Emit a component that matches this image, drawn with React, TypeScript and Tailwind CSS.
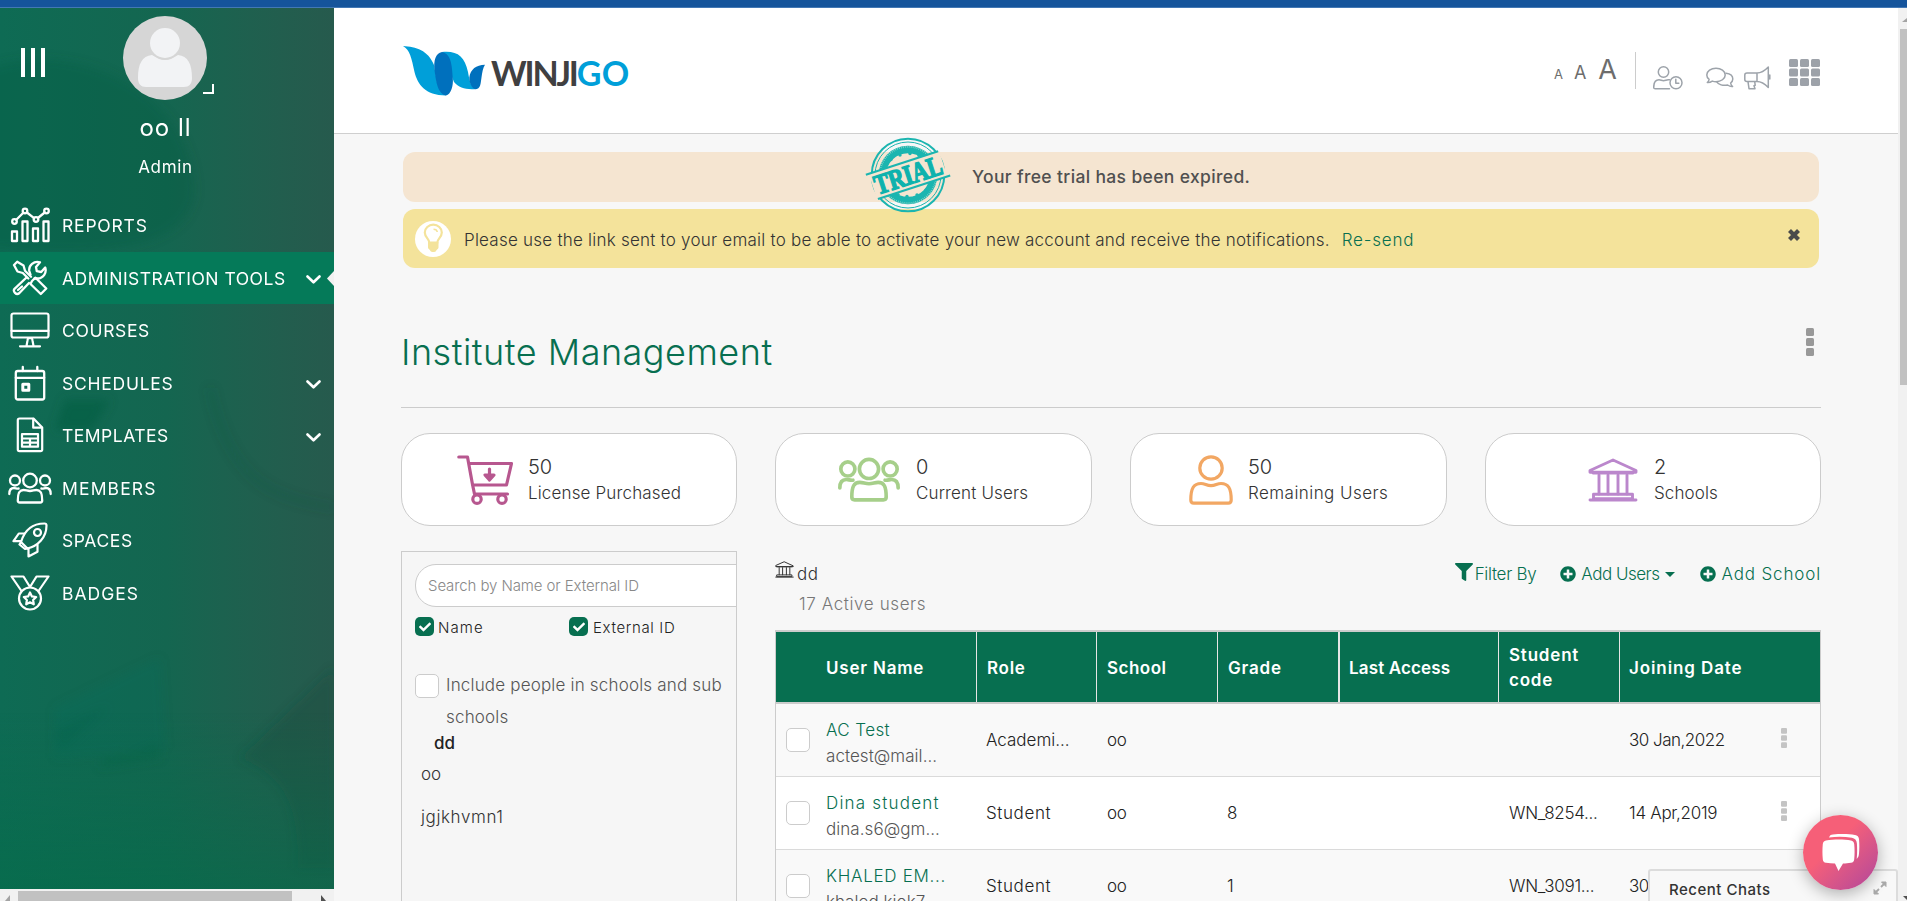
import React from "react";
import { FaFilter, FaPlusCircle, FaCheck } from "react-icons/fa";

type IconProps = { className?: string };

const stroke = {
  fill: "none",
  stroke: "currentColor",
  strokeLinecap: "round" as const,
  strokeLinejoin: "round" as const,
};

function ReportsIcon() {
  return (
    <svg width="40" height="36" viewBox="0 0 40 36" {...stroke} strokeWidth="2.300">
      <rect x="2" y="24.500" width="5" height="9.500" />
      <rect x="12.500" y="14.500" width="5" height="19.500" />
      <rect x="23" y="21.500" width="5" height="12.500" />
      <rect x="33.500" y="14.500" width="5" height="19.500" />
      <circle cx="4.500" cy="14.500" r="2.300" />
      <circle cx="15" cy="4" r="2.300" />
      <circle cx="26" cy="12.500" r="2.300" />
      <circle cx="36.500" cy="4" r="2.300" />
      <path d="M6.300 12.700 13.300 5.800M16.900 5.500l7.200 5.600M27.900 11l6.800-5.500" />
    </svg>
  );
}

function ToolsIcon() {
  return (
    <svg width="36" height="36" viewBox="0 0 36 36" {...stroke} strokeWidth="2.300">
      <path d="M2 5 5.200 1.800 11.500 5.500l1.500 5.300 6 6M2 5l3.500 6.500 5.300 1.500 5.500 5.500" />
      <path d="M18.500 14.500 17.300 11c-.8-5.500 4.500-10.500 10.700-8.700L24 7l.8 4.200 4.400.8 4-4.500c1.800 5-1.700 11-7.700 11h-3" />
      <path d="M14.500 17.500 2.500 28.800c-2 2.700 1.700 6.700 4.700 4.500L17 23" />
      <path d="M20 21l3.500-3.300L34.300 28.500 28.800 34 18.500 24z" />
      <path d="M6 30 10 26.500" />
    </svg>
  );
}

function MonitorIcon() {
  return (
    <svg width="40" height="36" viewBox="0 0 40 36" {...stroke} strokeWidth="2.200">
      <rect x="1.500" y="1.500" width="37" height="24" rx="2" />
      <path d="M1.500 18.800h37M10 34.300h20M16.500 34l1-5.500c.2-1.500.5-2.300 1.200-2.300h2.600c.7 0 1 .8 1.200 2.300l1 5.500" />
    </svg>
  );
}

function CalendarIcon() {
  return (
    <svg width="32" height="36" viewBox="0 0 32 36" {...stroke} strokeWidth="2.300">
      <rect x="1.800" y="6" width="28.400" height="28.500" rx="2" />
      <path d="M1.800 12.800h28.400M8.800 6V2M23.300 6V2" />
      <rect x="8.800" y="19.300" width="6" height="6" strokeWidth="3" />
    </svg>
  );
}

function SheetIcon() {
  return (
    <svg width="28" height="36" viewBox="0 0 28 36" {...stroke} strokeWidth="2.200">
      <path d="M1.800 3.200c0-1 .6-1.700 1.700-1.700h14l8.700 9v22c0 1-.6 1.700-1.700 1.700h-21c-1 0-1.700-.6-1.700-1.700z" />
      <path d="M17.200 1.800v8.900h8.700" />
      <path d="M6 17.200h16v12.500H6zM6 21.500h16M6 25.600h16M14 21.500v8" />
    </svg>
  );
}

function GroupIcon({ className, width = 2.3 }: IconProps & { width?: number }) {
  return (
    <svg className={className} viewBox="0 0 44 32" preserveAspectRatio="none" {...stroke} strokeWidth={width}>
      <circle cx="22" cy="8.500" r="6.800" />
      <circle cx="7" cy="8.500" r="5" />
      <circle cx="37" cy="8.500" r="5" />
      <path d="M9.800 28.500c0-7.500 1.500-10.500 5.700-10.500 2.500 0 3.700 1 6.500 1s4-1 6.500-1c4.200 0 5.700 3 5.700 10.500 0 1.300-.6 2-2 2H11.800c-1.400 0-2-.7-2-2z" />
      <path d="M1.300 22c0-4 1.600-6 4.600-6 1.700 0 2.700.7 4.700.5M42.700 22c0-4-1.600-6-4.600-6-1.700 0-2.700.7-4.700.5" />
    </svg>
  );
}

function RocketIcon() {
  return (
    <svg width="36" height="36" viewBox="0 0 36 36" {...stroke} strokeWidth="2.200">
      <path d="M9 20C12 10 19 1.500 32.500 1.500c1.300 0 2 .6 2 2C34.500 16 25.500 24 15.500 26.500z" />
      <circle cx="25.500" cy="10.500" r="3.500" />
      <path d="M12.500 11.500H6.800L1.500 19.200h7M9 20l-1.500 2.500 5.500 4.500 2.500-.5M16.500 27v7.500l9-4.700v-7.300" />
    </svg>
  );
}

function MedalIcon() {
  return (
    <svg width="40" height="36" viewBox="0 0 40 36" {...stroke} strokeWidth="2.200">
      <circle cx="20" cy="23.500" r="11" />
      <path d="M11.500 16 1.500 1.500h12L20 12M28.500 16l10-14.500h-12L20 12" />
      <path d="m20 17.500 1.900 3.900 4.300.6-3.100 3 .7 4.300-3.800-2-3.800 2 .7-4.300-3.100-3 4.300-.6z" />
    </svg>
  );
}

function ChevronIcon() {
  return (
    <svg className="mt-[4px]" width="15" height="9" viewBox="0 0 15 9" {...stroke} strokeWidth="2.600">
      <path d="m1.500 1.500 6 5.800 6-5.800" />
    </svg>
  );
}

function CartIcon() {
  return (
    <svg width="56" height="50" viewBox="0 0 56 50" {...stroke} strokeWidth="3.200">
      <path d="M1.800 2h8.700l5 27.500L17.500 39h33M12.500 8.500h42L49.500 30h-34" />
      <circle cx="20" cy="44.200" r="4.200" />
      <circle cx="45" cy="44.200" r="4.200" />
      <path d="M32.500 14v6" />
      <path d="M28 20h9l-4.500 5z" fill="currentColor" />
    </svg>
  );
}

function PersonIcon() {
  return (
    <svg width="44" height="50" viewBox="0 0 44 50" {...stroke} strokeWidth="3.200">
      <circle cx="22" cy="13" r="11.200" />
      <path d="M1.800 45c0-12 3-16.500 10.200-16.500 4 0 5.500 2.200 10 2.200s6-2.200 10-2.200c7.200 0 10.200 4.500 10.200 16.500 0 2.300-.8 3.200-3 3.200H4.800c-2.200 0-3-.9-3-3.200z" />
    </svg>
  );
}

function BankIcon({ className, width = 2.9 }: IconProps & { width?: number }) {
  return (
    <svg className={className} viewBox="0 0 50 44" {...stroke} strokeWidth={width}>
      <path d="M25 2 48 12.500v1.800H2v-1.800zM5 15h40" />
      <path d="M11 17v19M20 17v19M30 17v19M39 17v19" />
      <path d="M5.500 36.200h39v4.600h-39zM2 42h46" />
    </svg>
  );
}

function ButterflyLogo() {
  return (
    <svg width="82" height="50" viewBox="0 0 82 50">
      <path fill="#009fd9" d="M0 0c13 1 25 4 31 19l3 17 9 13.500C22 49.500 14.500 38 11.500 26 8.500 12 7 4 0 0z" />
      <path fill="#009fd9" d="M39 6c15-1.500 22.500 4 26 20 1.500 9 3 15 8 17-10 .8-17-1-22-7z" />
      <path fill="#0070bd" d="M39 6c-6.500 1-8.500 9-7.500 18 1.500 12 3.500 24 11.500 25.500 5-1 7.500-10 6.800-17C49 20 48.500 8 39 6z" />
      <path fill="#0070bd" d="M82 18.800c-9 .2-14.500 4.500-15.700 12.700 0 5 2.200 10.500 5.700 11.700 6-.2 5.500-5.700 6.500-11.700.7-5 1.500-10 3.500-12.700z" />
    </svg>
  );
}

function TrialStamp() {
  const stars = [-14, -5, 5, 14];
  return (
    <svg width="86" height="76" viewBox="-43 -38 86 76">
      <g fill="none" stroke="#1bb5b0">
        <circle r="36.300" strokeWidth="2" />
        <circle r="33" strokeWidth="1" />
        <circle r="25.500" strokeWidth="7.500" />
        <circle r="28.300" strokeWidth="2" stroke="#9ad8cb" strokeDasharray="0.700 1.300" />
      </g>
      <g transform="rotate(-18)">
        <rect x="-37" y="-13" width="74" height="26.500" fill="#f5e5d1" />
        <path d="M-40-13.200h76M-36 13.500h76" stroke="#1bb5b0" strokeWidth="2.200" />
        <text
          textAnchor="middle"
          y="9.500"
          textLength="70"
          lengthAdjust="spacingAndGlyphs"
          fill="#0eb2ad"
          stroke="#0eb2ad"
          strokeWidth="1.500"
          className="font-['Liberation_Serif',serif] text-[28px] font-bold"
        >
          TRIAL
        </text>
      </g>
      <g fill="#1bb5b0">
        {stars.map((x) => (
          <circle key={x} cx={x - 3} cy={-17.5 - (14 - Math.abs(x)) * 0.35 - x * 0.15} r="1.700" />
        ))}
        {stars.map((x) => (
          <circle key={x} cx={x + 4} cy={17.5 + (14 - Math.abs(x)) * 0.35 - x * 0.15} r="1.700" />
        ))}
      </g>
    </svg>
  );
}

function BulbIcon() {
  return (
    <svg width="36" height="36" viewBox="0 0 36 36">
      <circle cx="18" cy="18" r="18" fill="#fff" />
      <path
        d="M14.300 21.500c0-3.500-4.500-5-4.500-10a8.500 7.800 0 0 1 17 0c0 5-4.500 6.500-4.500 10z"
        fill="#fff"
        stroke="#f4e39b"
        strokeWidth="2.200"
      />
      <path d="M13 21h10.500v5.500c0 1.500-2 2-2.500 3.500-.5 1.300-5 1.300-5.500 0-.5-1.500-2.500-2-2.500-3.500z" fill="#f4e39b" />
      <path d="M18.500 8.200c2 0 3.500 1 3.800 2.800" fill="none" stroke="#f4e39b" strokeWidth="1.500" />
    </svg>
  );
}

function CloseIcon() {
  return (
    <svg className="mb-[8px] ml-auto" width="12" height="12" viewBox="0 0 12 12" stroke="#4a4a4a" strokeWidth="4.200">
      <path d="m1.500 1.500 9 9M10.500 1.500l-9 9" />
    </svg>
  );
}

function UserClockIcon() {
  return (
    <svg width="30" height="24" viewBox="0 0 30 24" {...stroke} strokeWidth="1.500">
      <circle cx="10.500" cy="6" r="5.200" />
      <path d="M16.500 22.800H2.200c-1 0-1.500-.5-1.500-1.300C.7 16 2.500 13.800 6 13.800c2 0 2.500.9 4.500.9s2.700-.9 4.700-.9h1.300" />
      <circle cx="23" cy="16.800" r="6" />
      <path d="M22.800 13.300v4h3" />
    </svg>
  );
}

function ChatsIcon() {
  return (
    <svg width="28" height="22" viewBox="0 0 28 22" {...stroke} strokeWidth="1.500">
      <path d="M10 1.200c5 0 9.200 2.800 9.200 6.700s-4.200 6.800-9.200 6.800c-1.300 0-2.500-.2-3.700-.6-1.300.9-3 1.500-5 1.400 1.200-1 1.700-2 1.800-3.200C1.600 11.200.8 9.600.8 7.900.8 4 5 1.200 10 1.200z" />
      <path d="M20 6.300c4 .4 6.800 2.700 6.800 5.700 0 1.700-.8 3-2.200 4 .2 1.200.8 2.500 2 3.500-1.800.2-3.500-.4-5-1.500-4.500 1-9.300-.3-11-3.300" />
    </svg>
  );
}

function MegaphoneIcon() {
  return (
    <svg width="27" height="24" viewBox="0 0 27 24" {...stroke} strokeWidth="1.500">
      <path d="M13 7H3C1.500 7 .8 7.700.8 9v4.500c0 1.300.7 2 2.200 2h10zM13 7c4.500 0 8-2.500 11.300-6v20.500C21 18 17.500 15.500 13 15.500M4 15.700l1 7h6l-1-3 1.200-.5-.5-3.500M25.800 9v4" />
    </svg>
  );
}

function AppsIcon() {
  return (
    <svg width="31" height="27" viewBox="0 0 31 27" fill="#9da2a9">
      {[0, 11, 22].map((x) =>
        [0, 9.5, 19].map((y) => <rect key={`${x}-${y}`} x={x} y={y} width="9" height="8" rx="1.500" />)
      )}
    </svg>
  );
}

const menu = [
  { label: "REPORTS", icon: <ReportsIcon />, chevron: false, active: false, track: "tracking-[0.8px]" },
  { label: "ADMINISTRATION TOOLS", icon: <ToolsIcon />, chevron: true, active: true, track: "tracking-[0.5px]" },
  { label: "COURSES", icon: <MonitorIcon />, chevron: false, active: false, track: "tracking-[0.65px]" },
  { label: "SCHEDULES", icon: <CalendarIcon />, chevron: true, active: false, track: "tracking-[0.75px]" },
  { label: "TEMPLATES", icon: <SheetIcon />, chevron: true, active: false, track: "tracking-[0.5px]" },
  { label: "MEMBERS", icon: <GroupIcon className="h-[32px] w-[44px]" />, chevron: false, active: false, track: "tracking-[1.150px]" },
  { label: "SPACES", icon: <RocketIcon />, chevron: false, active: false, track: "tracking-[0.6px]" },
  { label: "BADGES", icon: <MedalIcon />, chevron: false, active: false, track: "tracking-[1px]" },
];

function Sidebar() {
  return (
    <aside className="flex w-[334px] shrink-0 flex-col">
      <div className="relative h-[881px] overflow-hidden bg-linear-to-r from-[#0e6b54] via-[#146650] to-[#265a4d] text-white">
        <svg className="absolute inset-0" width="334" height="881" viewBox="0 0 334 881">
          <defs>
            <linearGradient id="fade" x1="0" y1="0" x2="0" y2="1">
              <stop offset="0.800" stopColor="#046d4a" stopOpacity="0" />
              <stop offset="1" stopColor="#046d4a" stopOpacity="0.600" />
            </linearGradient>
            <filter id="soft">
              <feGaussianBlur stdDeviation="5" />
            </filter>
          </defs>
          <g filter="url(#soft)">
            <path d="M-10 60C70 30 190 80 195 180c0 60-90 70-205 60z" fill="#035c3e" opacity="0.300" />
            <path d="M65 392h45l-18 30H55z" fill="#035c3e" opacity="0.550" />
            <path d="M210 380c20 100 70 110 124 120" stroke="#1b5147" strokeWidth="6" fill="none" opacity="0.200" />
            <path d="M55 700 160 650l5 90-110 10z" fill="#12705f" opacity="0.200" />
            <path d="M55 722 110 698l-50 45z" fill="#046044" opacity="0.250" />
            <path d="M100 752l60-16v14l-60 10z" fill="#046044" opacity="0.350" />
            <path d="M240 750l94-90v200h-36c0-60-10-90-58-110z" fill="#134a3e" opacity="0.350" />
          </g>
          <rect width="334" height="881" fill="url(#fade)" />
        </svg>
        <div className="relative flex h-full flex-col">
          <div className="relative flex h-[191px] flex-col items-center pt-[8px]">
            <div className="absolute left-[21px] top-[40px] flex gap-[6px]">
              <span className="h-[29px] w-[4px] bg-white" />
              <span className="h-[29px] w-[4px] bg-white" />
              <span className="h-[29px] w-[4px] bg-white" />
            </div>
            <svg className="mr-[4px]" width="84" height="84" viewBox="0 0 84 84">
              <circle cx="42" cy="42" r="42" fill="#d6d6d6" />
              <path
                d="M15 62c0-14 4-22 14-23 5 3 8 5 13 5s8-2 13-5c10 1 14 9 14 23 0 6-3 9-8 9H23c-5 0-8-3-8-9z"
                fill="#f2f3f5"
              />
              <circle cx="42" cy="27" r="16.500" fill="#d6d6d6" />
              <circle cx="42" cy="27" r="15" fill="#f2f3f5" />
            </svg>
            <span className="absolute left-[203px] top-[76px] h-[10px] w-[11px] border-b-2 border-r-2 border-white" />
            <div className="mr-[3px] mt-[13px] text-[24px] leading-[30px] tracking-[1px]">oo ll</div>
            <div className="mr-[3px] mt-[14px] text-[17px] leading-[20px] tracking-[0.7px]">Admin</div>
          </div>
          <nav>
            {menu.map((m) => (
              <div
                key={m.label}
                className={`relative flex h-[52.5px] items-center pr-[13px] ${m.active ? "bg-[#057a59]" : ""}`}
              >
                <span className="flex w-[60px] shrink-0 items-center justify-center">{m.icon}</span>
                <span className={`mt-px flex-1 whitespace-nowrap pl-[2px] text-[17.5px] leading-none ${m.track}`}>{m.label}</span>
                {m.chevron && <ChevronIcon />}
                {m.active && (
                  <svg className="absolute right-0 top-[19px]" width="7" height="15" viewBox="0 0 7 15">
                    <path d="M7 0v15L0 7.500z" fill="#f1f1f1" />
                  </svg>
                )}
              </div>
            ))}
          </nav>
        </div>
      </div>
      <div className="flex h-[12px] items-end justify-between bg-[#f1f1f1] pl-[5px] pr-[8px]">
        <svg width="5" height="6" viewBox="0 0 5 6">
          <path d="M5 0v6H0z" fill="#a3a3a3" />
        </svg>
        <span className="mr-[21px] h-[10px] w-[274px] bg-[#c1c1c1]" />
        <svg width="5" height="6" viewBox="0 0 5 6">
          <path d="M0 0v6h5z" fill="#505050" />
        </svg>
      </div>
    </aside>
  );
}

function Header() {
  return (
    <header className="flex h-[126px] shrink-0 items-start justify-between border-b border-[#cfcfcf] bg-white pl-[69px] pr-[78px]">
      <div className="flex pt-[38px]">
        <ButterflyLogo />
        <div className="ml-[6px] mt-[10px] whitespace-nowrap font-['Lato',sans-serif] text-[34px] font-bold leading-[34px] tracking-[-2.200px] text-[#404041]">
          WINJI<span className="tracking-[0.3px] text-[#009fd9]">GO</span>
        </div>
      </div>
      <div className="flex items-start text-[#9da3aa]">
        <div className="mt-[45px] flex items-baseline text-[#6d6d6d]">
          <span className="text-[13px]">A</span>
          <span className="ml-[11px] text-[18px]">A</span>
          <span className="ml-[12px] text-[27px] leading-[34px]">A</span>
        </div>
        <span className="ml-[18px] mt-[44px] h-[37px] w-px bg-[#ccc]" />
        <div className="ml-[17px] mt-[58px]">
          <UserClockIcon />
        </div>
        <div className="ml-[23px] mt-[59px]">
          <ChatsIcon />
        </div>
        <div className="ml-[10px] mt-[58px]">
          <MegaphoneIcon />
        </div>
        <div className="ml-[18px] mt-[51px]">
          <AppsIcon />
        </div>
      </div>
    </header>
  );
}

function Dots({ className }: IconProps) {
  return (
    <svg className={className} viewBox="0 0 8 28" preserveAspectRatio="none" fill="currentColor">
      <rect width="8" height="8" rx="1.500" />
      <rect y="10" width="8" height="8" rx="1.500" />
      <rect y="20" width="8" height="8" rx="1.500" />
    </svg>
  );
}

const stats = [
  { value: "50", label: "License Purchased", icon: <CartIcon />, pad: "pl-[55px]", gap: "ml-[15px]", color: "text-[#b7578f]", track: "tracking-[0.15px]" },
  { value: "0", label: "Current Users", icon: <GroupIcon className="h-[45px] w-[62px]" width={2.6} />, pad: "pl-[62px]", gap: "ml-[16px]", color: "text-[#a6cf8a]", track: "tracking-[0.15px]" },
  { value: "50", label: "Remaining Users", icon: <PersonIcon />, pad: "pl-[58px]", gap: "ml-[15px]", color: "text-[#f2a763]", track: "tracking-[0.45px]" },
  { value: "2", label: "Schools", icon: <BankIcon className="h-[44px] w-[50px]" />, pad: "pl-[102px]", gap: "ml-[16px]", color: "text-[#bb87cc]", track: "tracking-[0.1px]" },
];

function StatCards() {
  return (
    <div className="mt-[25px] grid grid-cols-[336px_317px_317px_336px] gap-[38px]">
      {stats.map((s) => (
        <div key={s.label} className={`flex h-[93px] items-center rounded-[29px] border border-[#ccc] bg-white ${s.pad}`}>
          <span className={s.color}>{s.icon}</span>
          <div className={`mt-[2px] whitespace-nowrap text-[#333] ${s.gap}`}>
            <div className="text-[20px] font-light leading-[26px]">{s.value}</div>
            <div className={`text-[17px] font-light leading-[27px] ${s.track}`}>{s.label}</div>
          </div>
        </div>
      ))}
    </div>
  );
}

function TickedBox() {
  return (
    <span className="flex size-[19px] items-center justify-center rounded-[5px] bg-[#076f50] text-white">
      <FaCheck size={12} />
    </span>
  );
}

function SearchPanel() {
  return (
    <section className="h-[400px] overflow-hidden border border-[#ccc] bg-[#f6f6f6] pl-[13px] pt-[12px]">
      <div className="flex h-[43px] w-[360px] items-center rounded-[21px] border border-[#ccc] bg-white pl-[12px] pt-px text-[15px] font-light tracking-[-0.1px] text-[#888]">
        Search by Name or External ID
      </div>
      <div className="mt-[9px] flex text-[15px] font-light leading-[19px] text-[#222]">
        <div className="flex w-[154px] items-center gap-[4px]">
          <TickedBox />
          <span className="mt-[2px] tracking-[1.1px]">Name</span>
        </div>
        <div className="flex items-center gap-[5px]">
          <TickedBox />
          <span className="mt-[2px] tracking-[0.65px]">External ID</span>
        </div>
      </div>
      <div className="mt-[32px] flex text-[17px] font-light leading-[32px] text-[#555]">
        <span className="mr-[7px] mt-[5px] size-[24px] shrink-0 rounded-[5px] border border-[#ccc] bg-white" />
        <span className="w-[290px] tracking-[0.18px]">
          Include people in schools and sub
          <br />
          schools
        </span>
      </div>
      <div className="pl-[19px] pt-px text-[17px] font-medium leading-[18px] text-[#222]">dd</div>
      <div className="pl-[6px] pt-px text-[17px] font-light leading-[43px] text-[#333]">oo</div>
      <div className="pl-[6px] text-[17px] font-light leading-[43px] tracking-[0.6px] text-[#333]">jgjkhvmn1</div>
    </section>
  );
}

const cols = "grid grid-cols-[200px_120px_121px_121px_160px_121px_201px]";

const rows = [
  { name: "AC Test", nameTrack: "tracking-[0.4px]", mail: "actest@mail...", role: "Academi...", roleTrack: "tracking-[0px]", grade: "", code: "", date: "30 Jan,2022", dateTrack: "tracking-[-0.5px]" },
  { name: "Dina student", nameTrack: "tracking-[1.2px]", mail: "dina.s6@gm...", role: "Student", roleTrack: "tracking-[0.6px]", grade: "8", code: "WN_8254...", date: "14 Apr,2019", dateTrack: "tracking-[-0.3px]" },
  { name: "KHALED EM...", nameTrack: "tracking-[0.7px]", mail: "khaled.kiok7...", role: "Student", roleTrack: "tracking-[0.6px]", grade: "1", code: "WN_3091...", date: "30 Jan,2022", dateTrack: "tracking-[-0.5px]" },
];

const headings = [
  { text: "User Name", cell: "pl-[50px] tracking-[0.8px]" },
  { text: "Role", cell: "border-l pl-[10px] tracking-[0.7px]" },
  { text: "School", cell: "border-l pl-[10px] tracking-[0.5px]" },
  { text: "Grade", cell: "border-l pl-[10px] tracking-[0.8px]" },
  { text: "Last Access", cell: "border-l-2 pl-[9px] tracking-[0.15px]" },
  { text: "Student code", cell: "border-l pl-[10px] pr-[10px] tracking-[0.8px]" },
  { text: "Joining Date", cell: "border-l pl-[9px] tracking-[0.9px]" },
];

function UsersSection() {
  return (
    <section>
      <div className="flex items-start justify-between text-[17px] font-light text-[#076f50]">
        <div className="flex pt-[10px] text-[#333]">
          <BankIcon className="h-[17px] w-[19px]" width={2.6} />
          <span className="ml-[3px] mt-[3px] leading-[20px] tracking-[0.4px]">dd</span>
        </div>
        <div className="flex items-start whitespace-nowrap pt-[11px] leading-[24px]">
          <FaFilter size={18} className="mt-px" />
          <span className="ml-[2px] tracking-[-0.3px]">Filter By</span>
          <FaPlusCircle size={16} className="ml-[24px] mt-[4px]" />
          <span className="ml-[5px] tracking-[-0.5px]">Add Users</span>
          <svg className="ml-[5px] mt-[10px]" width="10" height="5" viewBox="0 0 10 5">
            <path d="M0 0h10L5 5z" fill="currentColor" />
          </svg>
          <FaPlusCircle size={16} className="ml-[25px] mt-[4px]" />
          <span className="ml-[6px] tracking-[0.85px]">Add School</span>
        </div>
      </div>
      <div className="mt-[4px] h-[40px] pl-[24px] pt-[2px] text-[17px] font-light leading-[24px] tracking-[0.6px] text-[#777]">
        17 Active users
      </div>

      <div className="border-x border-[#ccc]">
        <div className={`${cols} h-[74px] border-b-2 border-t-2 border-[#ccc] bg-[#076f50]`}>
          {headings.map((h) => (
            <div
              key={h.text}
              className={`flex items-center border-[#e5e5e5] pt-[2px] text-[17px] font-semibold leading-[25px] text-white ${h.cell}`}
            >
              {h.text}
            </div>
          ))}
        </div>
        {rows.map((r, i) => (
          <div
            key={r.name}
            className={`${cols} h-[73px] items-center border-b border-[#dadada] text-[17px] font-light tracking-[-0.3px] text-[#222] ${
              i % 2 ? "bg-white" : "bg-[#f9f9f9]"
            }`}
          >
            <div className="flex items-center pl-[10px]">
              <span className="mr-[16px] size-[24px] shrink-0 rounded-[5px] border border-[#ccc] bg-white" />
              <div className="mt-[5px] whitespace-nowrap leading-[26px]">
                <div className={`text-[#076f50] ${r.nameTrack}`}>{r.name}</div>
                <div className="tracking-[0.05px] text-[#555]">{r.mail}</div>
              </div>
            </div>
            <div className={`pl-[10px] pt-[2px] ${r.roleTrack}`}>{r.role}</div>
            <div className="pl-[11px] pt-[2px]">oo</div>
            <div className="pl-[10px] pt-[2px]">{r.grade}</div>
            <div />
            <div className="pl-[11px] pt-[2px]">{r.code}</div>
            <div className="flex items-center justify-between pl-[10px] pr-[33px]">
              <span className={`pt-[2px] ${r.dateTrack}`}>{r.date}</span>
              <Dots className="mb-[4px] h-[20px] w-[6px] text-[#c4c4c4]" />
            </div>
          </div>
        ))}
      </div>
    </section>
  );
}

function Notices() {
  return (
    <div className="mt-[18px] flex flex-col gap-[7px] px-[2px]">
      <div className="relative flex h-[50px] items-center rounded-[12px] bg-[#f5e5d1] pl-[569px] text-[17.5px] font-medium text-[#505050]">
        <span className="absolute left-[462px] top-[-15px] z-10">
          <TrialStamp />
        </span>
        <span className="whitespace-nowrap tracking-[0.35px]">Your free trial has been expired.</span>
      </div>
      <div className="flex h-[59px] items-center rounded-[12px] bg-[#f4e39b] pl-[12px] pr-[19px] text-[17px] font-light text-[#333]">
        <BulbIcon />
        <span className="ml-[13px] mt-[5px] whitespace-nowrap tracking-[0.235px]">
          Please use the link sent to your email to be able to activate your new account and receive the notifications.
        </span>
        <span className="ml-[12px] mt-[5px] tracking-[0.8px] text-[#076f50]">Re-send</span>
        <CloseIcon />
      </div>
    </div>
  );
}

function ChatDock() {
  return (
    <>
      <div className="absolute left-[1648px] top-[869px] flex h-[40px] w-[250px] rounded-t-[3px] border-2 border-[#dcdcdc] bg-[#f8f8f8] pl-[19px] pt-[9px] text-[15px] font-medium leading-[20px] tracking-[0.5px] text-[#333]">
        Recent Chats
        <svg className="absolute left-[223px] top-[10px]" width="14" height="14" viewBox="0 0 14 14" fill="#aaa" stroke="#aaa">
          <path d="M8.500 1H13v4.500zM1 8.500V13h4.500z" />
          <path d="m11 3-3 3M6 8l-3 3" strokeWidth="1.800" />
        </svg>
      </div>
      <div className="absolute left-[1803px] top-[815px] flex size-[75px] items-center justify-center rounded-full bg-linear-135 from-[#f65f78] from-40% to-[#b0459a] shadow-[0_4px_16px_rgba(0,0,0,0.3)]">
        <svg width="40" height="38" viewBox="0 0 40 38" fill="#fff">
          <path d="M5 6.500c8-1.300 18-1.300 25 0 2 .4 3 1.500 3.200 3.500.5 5.500.5 10 0 15.500-.2 2-1.200 3-3.200 3.300-3 .5-5 .7-8 .8L17.500 37 14 29.600c-3-.1-6-.3-9-.8-2-.3-3-1.300-3.200-3.300-.5-5.500-.5-10 0-15.500C2 8 3 6.900 5 6.500z" />
          <path d="M8 3.500C9 1 10 .8 12 .6c8-.8 16-.6 22 .4 2.500.4 3.700 1.500 4 4 .5 5.500.4 10 0 14.500-.2 2.500-.8 4-2.300 5.500.5-5 .6-10 .2-15.500-.3-3.500-2-5.300-5-5.800-7.500-1-15-1.200-22.900-.2z" />
        </svg>
      </div>
    </>
  );
}

export default function App() {
  return (
    <div className="relative flex h-[901px] w-[1907px] flex-col overflow-hidden bg-[#f7f7f7] font-['Inter',sans-serif]">
      <div className="h-[8px] shrink-0 border-b border-[#4378b4] bg-[#15549b]" />
      <div className="flex min-h-0 flex-1">
        <Sidebar />
        <div className="flex w-[1564px] shrink-0 flex-col">
          <Header />
          <main className="px-[67px] pr-[77px]">
            <Notices />
            <div className="mt-[54px] flex h-[86px] items-start justify-between border-b border-[#ccc]">
              <h1 className="mt-[8px] text-[36px] font-light leading-[44px] tracking-[0.5px] text-[#076f50]">Institute Management</h1>
              <Dots className="mr-[7px] mt-[6px] h-[28px] w-[8px] text-[#999]" />
            </div>
            <StatCards />
            <div className="mt-[25px] grid grid-cols-[336px_1046px] gap-[38px]">
              <SearchPanel />
              <UsersSection />
            </div>
          </main>
        </div>
        <div className="relative flex flex-1 flex-col bg-[#f1f1f1] pl-[2px]">
          <div className="flex h-[21px] items-start justify-end pt-[10px]">
            <svg width="5" height="4" viewBox="0 0 5 4">
              <path d="M5 0v4H0z" fill="#a3a3a3" />
            </svg>
          </div>
          <div className="h-[356px] bg-[#c1c1c1]" />
          <svg className="mb-px ml-auto mt-auto" width="4" height="4" viewBox="0 0 4 4">
            <path d="M0 0h4v4z" fill="#505050" />
          </svg>
        </div>
      </div>
      <ChatDock />
    </div>
  );
}
